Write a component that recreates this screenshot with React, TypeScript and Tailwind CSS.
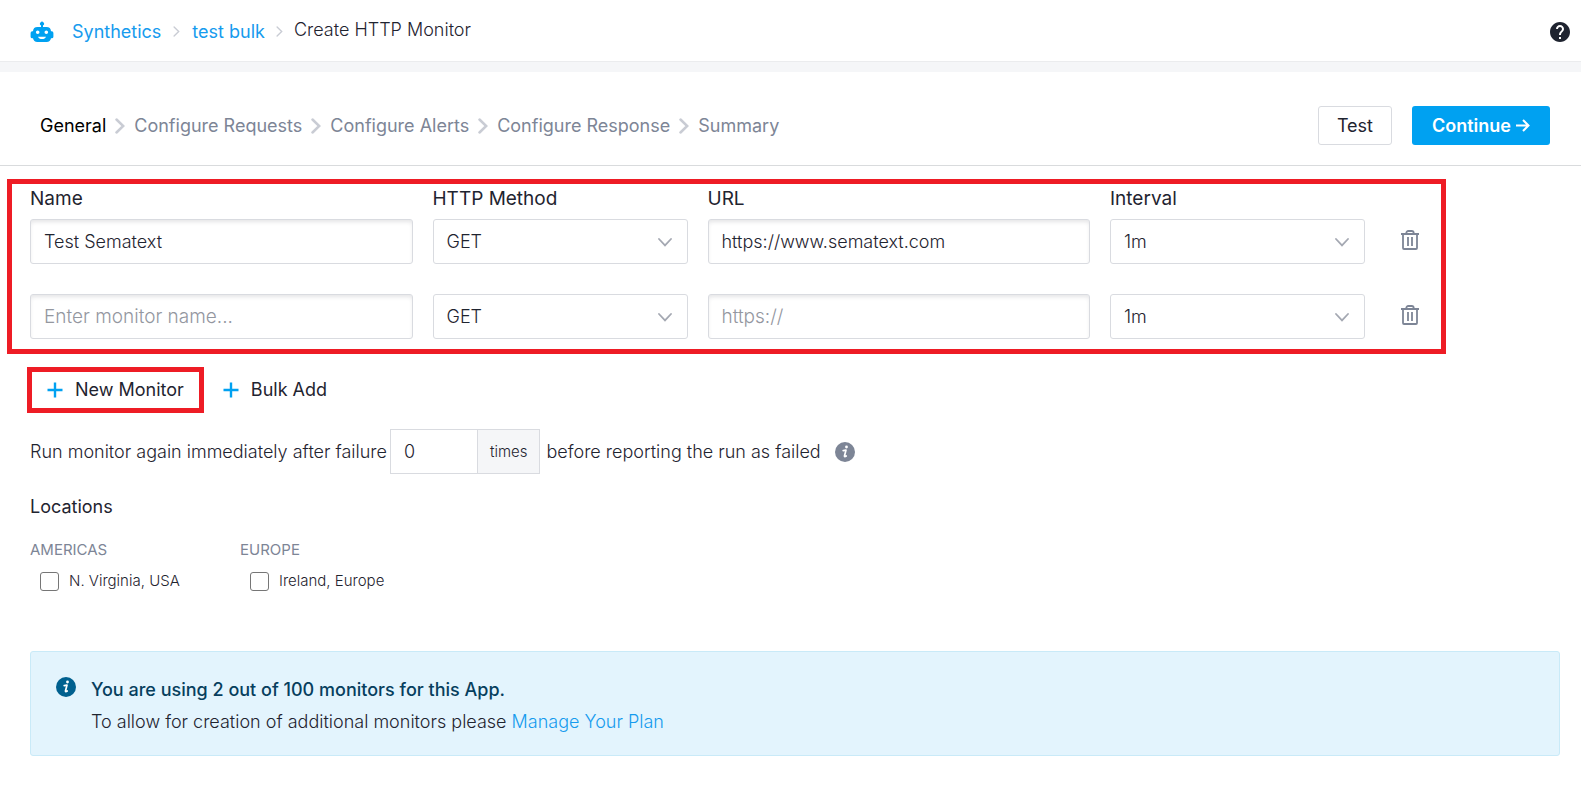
import React from 'react';
import { MdHelp } from 'react-icons/md';

type Monitor = { id: string; name: string; method: string; url: string; interval: string };

const MONITORS: Monitor[] = [
  { id: 'm1', name: 'Test Sematext', method: 'GET', url: 'https://www.sematext.com', interval: '1m' },
  { id: 'm2', name: '', method: 'GET', url: '', interval: '1m' },
];

const STEPS = ['General', 'Configure Requests', 'Configure Alerts', 'Configure Response', 'Summary'];

const REGIONS = [
  { title: 'AMERICAS', id: 'us', location: 'N. Virginia, USA' },
  { title: 'EUROPE', id: 'eu', location: 'Ireland, Europe' },
];

const inputClass =
  'h-[45px] w-full min-w-0 rounded-[3px] border border-[#d9dbe0] bg-white px-[13px] text-lg font-light text-[#1f2430] shadow-[inset_0_3px_4px_-1px_rgba(30,35,50,0.12)] outline-none placeholder:text-[19px] placeholder:text-[#94979f]';

function RobotIcon() {
  return (
    <svg width="24" height="22" viewBox="0 0 24 22" className="shrink-0 fill-[#00a1f1]" aria-hidden>
      <path
        fillRule="evenodd"
        d="M13 4.5V6h3.5A4.5 4.5 0 0 1 21 10.3h.8a1.6 1.6 0 0 1 1.6 1.6v3.8a1.6 1.6 0 0 1-1.6 1.6H21A4.5 4.5 0 0 1 16.5 21h-9A4.5 4.5 0 0 1 3 17.3h-.8a1.6 1.6 0 0 1-1.6-1.6v-3.8a1.6 1.6 0 0 1 1.6-1.6H3A4.5 4.5 0 0 1 7.5 6H11V4.5a2 2 0 1 1 2 0ZM7.7 9.4a1.8 1.8 0 1 0 0 3.6 1.8 1.8 0 0 0 0-3.6Zm8.6 0a1.8 1.8 0 1 0 0 3.6 1.8 1.8 0 0 0 0-3.6ZM8 15.7c.6 1.6 2 2.4 4 2.4s3.4-.8 4-2.4Z"
      />
    </svg>
  );
}

function Chevron({ className, strokeWidth }: { className: string; strokeWidth: number }) {
  return (
    <svg viewBox="0 0 10 16" fill="none" stroke="currentColor" strokeWidth={strokeWidth} className={className} aria-hidden>
      <path d="M1.5 1.5 8.2 8 1.5 14.5" strokeLinecap="round" />
    </svg>
  );
}

function InfoIcon({ className }: { className: string }) {
  return (
    <svg width="20" height="20" viewBox="0 0 20 20" className={className} aria-hidden>
      <circle cx="10" cy="10" r="10" />
      <circle cx="11.5" cy="5" r="1.4" fill="#fff" />
      <path
        d="M8.2 8.6 11 8.1 9.5 13.8c-.2 1 .6 1 1.7.2"
        fill="none"
        stroke="#fff"
        strokeWidth="1.7"
        strokeLinejoin="round"
        strokeLinecap="round"
      />
    </svg>
  );
}

function PlusIcon() {
  return (
    <svg width="16" height="16" viewBox="0 0 16 16" fill="none" stroke="#00a1f1" strokeWidth="2.4" className="shrink-0" aria-hidden>
      <path d="M8 .5v15M.5 8h15" />
    </svg>
  );
}

function TrashIcon() {
  return (
    <svg width="18" height="20" viewBox="0 0 18 20" fill="none" stroke="#7d8596" strokeWidth="1.8" aria-hidden>
      <path d="M0 4h18M2 4v14a1 1 0 0 0 1 1h12a1 1 0 0 0 1-1V4M5.3 4V3a2 2 0 0 1 2-2h3.4a2 2 0 0 1 2 2v1M7 7v9M11 7v9" />
    </svg>
  );
}

function Select({ id, label, value }: { id: string; label: string; value: string }) {
  return (
    <div className="relative">
      <select
        id={id}
        aria-label={label}
        defaultValue={value}
        className="h-[45px] w-full appearance-none rounded-[3px] border border-[#d9dbe0] bg-white px-[13px] text-lg font-light text-[#1f2430] outline-none"
      >
        <option>{value}</option>
      </select>
      <svg
        width="14"
        height="9"
        viewBox="0 0 14 9"
        fill="none"
        stroke="#a4a8b2"
        strokeWidth="1.8"
        className="pointer-events-none absolute top-[19px] right-4"
        aria-hidden
      >
        <path d="M1 1l6 6.4L13 1" strokeLinecap="round" />
      </svg>
    </div>
  );
}

export default function App() {
  return (
    <div className="min-h-screen bg-white font-[Inter,sans-serif] text-lg text-[#1f2430]">
      {/* Breadcrumbs */}
      <header className="flex items-center justify-between border-b border-[#ebecee] pt-[3px] pr-[9px] pb-px pl-[30px]">
        <nav aria-label="Breadcrumb" className="flex h-[57px] items-center">
          <RobotIcon />
          <a href="#synthetics" className="ml-[18px] text-[#169bee]">Synthetics</a>
          <Chevron className="mx-3 h-[11px] w-[7px] text-[#c9ccd4]" strokeWidth={2} />
          <a href="#test-bulk" className="text-[#169bee]">test bulk</a>
          <Chevron className="mx-[11px] h-[11px] w-[7px] text-[#c9ccd4]" strokeWidth={2} />
          <span className="pb-1 font-light">Create HTTP Monitor</span>
        </nav>
        <button type="button" aria-label="Help">
          <MdHelp className="h-6 w-6 text-[#1f2430]" />
        </button>
      </header>
      <div className="h-[10px] bg-[#f5f6f8]" />

      {/* Wizard steps */}
      <section className="flex h-[94px] items-center justify-between border-b border-[#d9dbdd] pt-[14px] pr-[31px] pl-10">
        <ol className="flex items-center">
          {STEPS.map((step, i) => (
            <li key={step} className={i === 0 ? 'flex items-center text-black' : 'flex items-center text-[#7d8596]'}>
              {i > 0 ? <Chevron className="mx-[9px] h-4 w-[10px] text-[#c9ccd4]" strokeWidth={2.5} /> : null}
              {step}
            </li>
          ))}
        </ol>
        <div className="flex gap-5">
          <button type="button" className="h-[39px] rounded-[3px] border border-[#d9dbe0] px-[18px]">Test</button>
          <button type="button" className="flex h-[39px] items-center gap-[5px] rounded-[3px] bg-[#00a1f1] px-5 font-semibold text-white">
            Continue
            <svg width="14" height="13" viewBox="0 0 14 13" fill="none" stroke="#fff" strokeWidth="2" aria-hidden>
              <path d="M0 6.5h12.5M7 1l5.500 5.500L7 12" />
            </svg>
          </button>
        </div>
      </section>

      <main>
        {/* Monitor rows */}
        <section className="mt-[13px] mr-[135px] ml-[7px] border-5 border-[#ee1c25] pt-px pr-[6px] pb-[10px] pl-[18px]">
          <div className="grid grid-cols-[3fr_2fr_3fr_2fr_50px] gap-x-5 text-[19px] leading-7">
            <label htmlFor="m1-name">Name</label>
            <label htmlFor="m1-method">HTTP Method</label>
            <label htmlFor="m1-url">URL</label>
            <label htmlFor="m1-interval">Interval</label>
          </div>
          <div className="mt-[6px] space-y-[30px]">
            {MONITORS.map((m) => (
              <div key={m.id} className="grid grid-cols-[3fr_2fr_3fr_2fr_50px] gap-x-5">
                <input id={`${m.id}-name`} aria-label="Name" defaultValue={m.name} placeholder="Enter monitor name..." className={inputClass} />
                <Select id={`${m.id}-method`} label="HTTP Method" value={m.method} />
                <input id={`${m.id}-url`} aria-label="URL" defaultValue={m.url} placeholder="https://" className={inputClass} />
                <Select id={`${m.id}-interval`} label="Interval" value={m.interval} />
                <button type="button" aria-label="Delete monitor" className="flex items-center justify-center pb-1">
                  <TrashIcon />
                </button>
              </div>
            ))}
          </div>
        </section>

        <div className="mt-[13px] ml-[27px] flex items-center">
          <button type="button" className="flex h-[46px] items-center gap-3 border-5 border-[#ee1c25] px-[15px]">
            <PlusIcon />
            New Monitor
          </button>
          <button type="button" className="ml-[19px] flex items-center gap-3">
            <PlusIcon />
            Bulk Add
          </button>
        </div>

        <div className="px-[30px]">
          {/* Retries */}
          <div className="mt-4 flex items-center font-light">
            <label htmlFor="retries">Run monitor again immediately after failure</label>
            <input
              id="retries"
              defaultValue="0"
              className="ml-[3px] h-[45px] w-[88px] border border-[#d9dbe0] px-[13px] outline-none"
            />
            <span className="flex h-[45px] items-center border border-l-0 border-[#d9dbe0] bg-[#f5f6f8] px-3 text-[15px]">times</span>
            <span className="ml-[6px]">before reporting the run as failed</span>
            <InfoIcon className="ml-[14px] fill-[#7d8596]" />
          </div>

          {/* Locations */}
          <h2 className="mt-[19px]">Locations</h2>
          <div className="mt-[17px] flex">
            {REGIONS.map((r) => (
              <div key={r.id} className="w-[210px]">
                <h3 className="text-[15px] leading-6 text-[#7d8596]">{r.title}</h3>
                <label className="mt-[7px] flex items-center gap-[10px] pl-[10px] text-[15px] leading-6 font-light">
                  <input type="checkbox" className="h-[19px] w-[19px] appearance-none rounded-[3px] border border-[#767676] bg-white" />
                  {r.location}
                </label>
              </div>
            ))}
          </div>

          {/* Plan usage */}
          <div className="mt-[58px] mr-[-9px] flex rounded-[3px] border border-[#c9eaf8] bg-[#e3f4fd] px-[25px] pt-[22px] pb-[17px] text-[#073f5e]">
            <InfoIcon className="mt-[3px] shrink-0 fill-[#00608f]" />
            <div className="ml-[15px] leading-8">
              <p className="font-medium">You are using 2 out of 100 monitors for this App.</p>
              <p className="font-light text-[#1f2430]">
                To allow for creation of additional monitors please{' '}
                <a href="#plan" className="text-[#169bee]">Manage Your Plan</a>
              </p>
            </div>
          </div>
        </div>
      </main>
    </div>
  );
}
